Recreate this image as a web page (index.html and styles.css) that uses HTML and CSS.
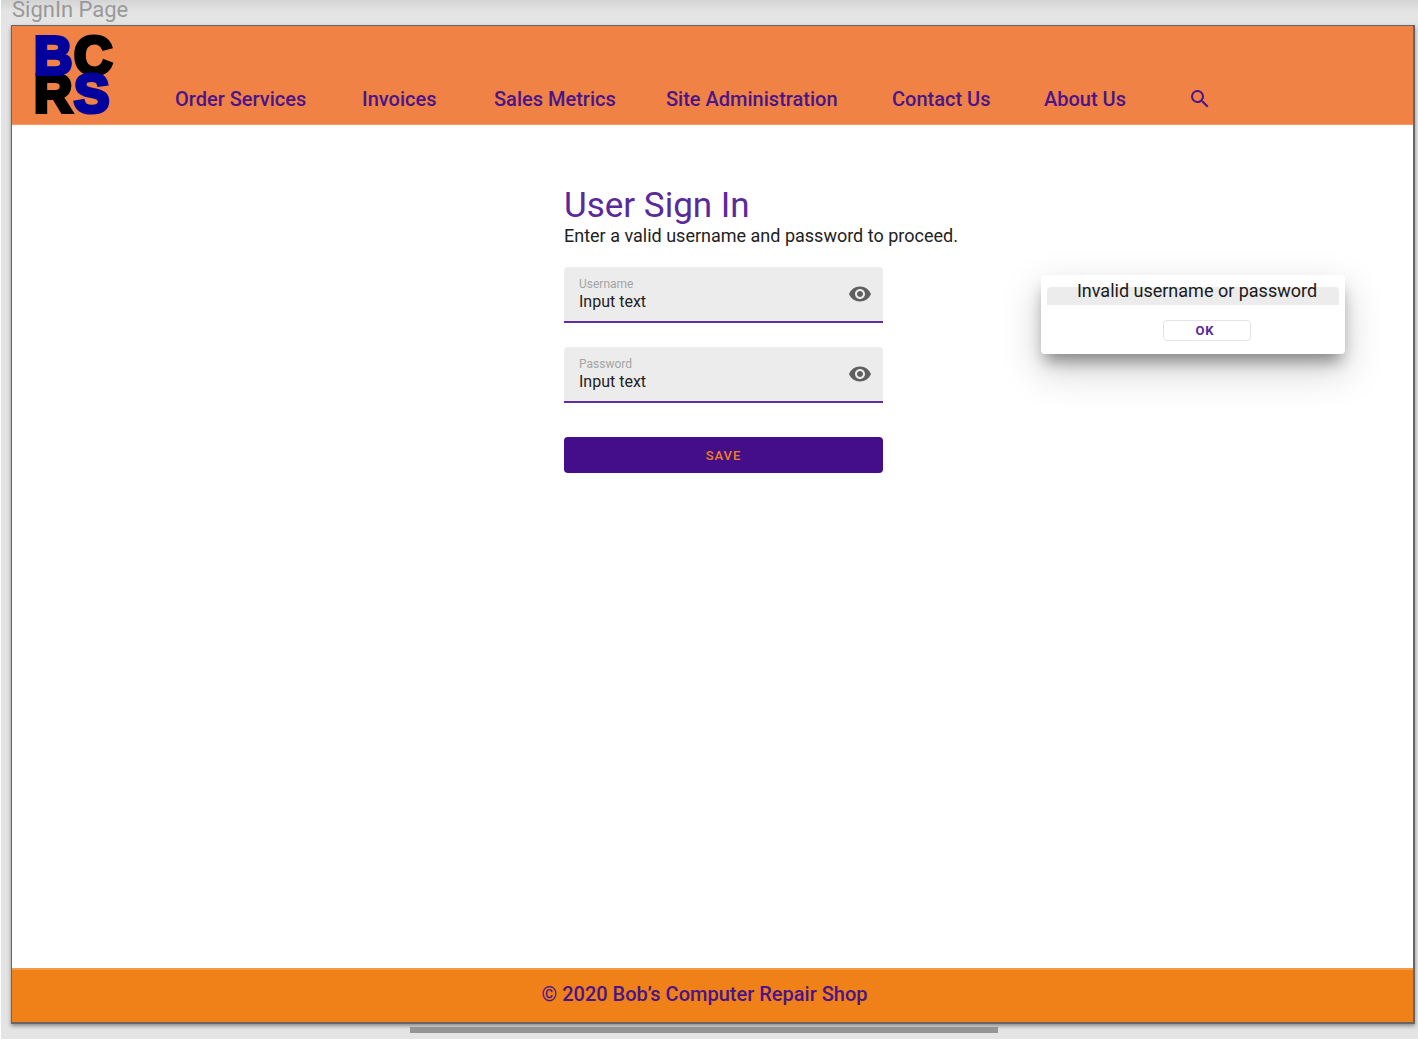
FILE: index.html
```html
<!DOCTYPE html>
<html lang="en">
<head>
<meta charset="utf-8">
<meta name="viewport" content="width=device-width, initial-scale=1">
<title>SignIn Page</title>
<link rel="stylesheet" href="styles.css">
</head>
<body>
<div class="canvas">
  <div class="canvas-label">SignIn Page</div>
  <div class="frame">
    <header class="header">
      <a class="logo" href="#" aria-label="Bob's Computer Repair Shop home">
        <span class="logo-row"><span class="blue">B</span><span>C</span></span>
        <span class="logo-row"><span>R</span><span class="blue">S</span></span>
      </a>
      <nav class="nav">
        <a href="#">Order Services</a>
        <a href="#">Invoices</a>
        <a href="#">Sales Metrics</a>
        <a href="#">Site Administration</a>
        <a href="#">Contact Us</a>
        <a href="#">About Us</a>
        <button class="icon-button" type="button" aria-label="Search">
          <svg width="24" height="24" viewBox="0 0 24 24"><path fill="currentColor" d="M15.5 14h-.79l-.28-.27A6.471 6.471 0 0 0 16 9.500 6.500 6.500 0 1 0 9.500 16c1.610 0 3.090-.59 4.230-1.570l.27.28v.79l5 4.990L20.490 19l-4.990-5zm-6 0C7.010 14 5 11.990 5 9.500S7.010 5 9.500 5 14 7.010 14 9.500 11.990 14 9.500 14z"/></svg>
        </button>
      </nav>
    </header>

    <main class="main">
      <form class="form">
        <h1>User Sign In</h1>
        <p class="intro">Enter a valid username and password to proceed.</p>
        <div class="field">
          <div class="field-text">
            <label for="username">Username</label>
            <input id="username" type="text" value="Input text">
          </div>
          <button class="icon-button eye" type="button" aria-label="Show username">
            <svg width="24" height="24" viewBox="0 0 24 24"><path fill="currentColor" d="M12 4.500C7 4.500 2.730 7.610 1 12c1.730 4.390 6 7.500 11 7.500s9.270-3.110 11-7.500c-1.730-4.390-6-7.500-11-7.500zM12 17c-2.760 0-5-2.240-5-5s2.240-5 5-5 5 2.240 5 5-2.240 5-5 5zm0-8c-1.660 0-3 1.340-3 3s1.340 3 3 3 3-1.340 3-3-1.340-3-3-3z"/></svg>
          </button>
        </div>
        <div class="field">
          <div class="field-text">
            <label for="password">Password</label>
            <input id="password" type="text" value="Input text">
          </div>
          <button class="icon-button eye" type="button" aria-label="Show password">
            <svg width="24" height="24" viewBox="0 0 24 24"><path fill="currentColor" d="M12 4.500C7 4.500 2.730 7.610 1 12c1.730 4.390 6 7.500 11 7.500s9.270-3.110 11-7.500c-1.730-4.390-6-7.500-11-7.500zM12 17c-2.760 0-5-2.240-5-5s2.240-5 5-5 5 2.240 5 5-2.240 5-5 5zm0-8c-1.660 0-3 1.340-3 3s1.340 3 3 3 3-1.340 3-3-1.340-3-3-3z"/></svg>
          </button>
        </div>
        <button class="save" type="submit">SAVE</button>
      </form>

      <div class="dialog" role="alertdialog" aria-labelledby="dialog-text">
        <div class="dialog-bar"><p id="dialog-text">Invalid username or password</p></div>
        <button class="ok" type="button">OK</button>
      </div>
    </main>

    <footer class="footer">© 2020 Bob’s Computer Repair Shop</footer>
  </div>
  <div class="scroll-thumb"></div>
</div>
</body>
</html>
```
FILE: styles.css
```css
* {
  box-sizing: border-box;
}

body {
  margin: 0;
  padding: 0 0 5px 1px;
  background: #fff;
  color: #222;
  font-family: Roboto, "Liberation Sans", sans-serif;
}

h1,
p {
  margin: 0;
  font-weight: 400;
}

button,
input {
  font-family: inherit;
}

.canvas {
  position: relative;
  display: flex;
  flex-direction: column;
  min-height: calc(100vh - 5px);
  padding: 0 3px 15px 10px;
  background: linear-gradient(#d4d4d4, #e4e4e4 12px);
}

.canvas-label {
  height: 25px;
  padding-left: 1px;
  color: #999;
  font-size: 22px;
  line-height: 20px;
}

.frame {
  flex: 1;
  display: flex;
  flex-direction: column;
  border: 1px solid #666;
  border-width: 1px 2px 2px 1px;
  background: #fff;
  box-shadow: 0 2px 4px rgba(0, 0, 0, 0.4);
}

.header {
  display: flex;
  align-items: flex-end;
  height: 99px;
  padding: 0 24px 0 22px;
  border-bottom: 1px solid #f79a68;
  background: #ef8244;
}

.logo {
  width: 141px;
  height: 87px;
  color: #000;
  font: 700 53px/38px "Liberation Sans", Arial, sans-serif;
  text-decoration: none;
  -webkit-text-stroke: 4px currentColor;
}

.logo-row {
  display: grid;
  grid-template-columns: 40px 40px;
}

.logo .blue {
  position: relative;
  color: #00009c;
}

.nav {
  display: grid;
  grid-template-columns: 187px 132px 172px 226px 152px 144px 24px;
  align-items: center;
  height: 50px;
  color: #4b1489;
}

.nav a {
  color: inherit;
  font-size: 20px;
  font-weight: 500;
  line-height: 24px;
  text-decoration: none;
  white-space: nowrap;
}

.icon-button {
  display: flex;
  padding: 0;
  border: 0;
  background: none;
  color: inherit;
}

.main {
  position: relative;
  flex: 1;
  padding: 60px 0 60px 22px;
}

.form {
  width: 319px;
  margin: 0 auto;
}

h1 {
  color: #5a2a9c;
  font-size: 35px;
  line-height: 41px;
}

.intro {
  margin-bottom: 21px;
  font-size: 18px;
  line-height: 20px;
  white-space: nowrap;
}

.field {
  display: flex;
  align-items: center;
  justify-content: space-between;
  height: 56px;
  margin-bottom: 24px;
  padding: 0 11px 0 15px;
  border-bottom: 2px solid #5d2fa0;
  border-radius: 4px 4px 0 0;
  background: #ececec;
}

.field-text {
  display: flex;
  flex-direction: column;
}

.field label {
  color: #a4a4a4;
  font-size: 12px;
  line-height: 14px;
}

.field input {
  width: 200px;
  height: 20px;
  padding: 0;
  border: 0;
  background: none;
  color: #222;
  font-size: 16px;
}

.eye {
  color: #606060;
}

.save {
  display: block;
  width: 100%;
  height: 36px;
  margin-top: 34px;
  padding: 0;
  border: 0;
  border-radius: 4px;
  background: #440e8a;
  color: #ef8020;
  font-size: 13px;
  font-weight: 500;
  letter-spacing: 1px;
}

.dialog {
  position: absolute;
  top: 150px;
  right: 68px;
  width: 304px;
  height: 79px;
  padding: 12px 6px;
  border-radius: 4px;
  background: #fff;
  box-shadow: 0 11px 15px -4px rgba(0, 0, 0, 0.4), 0 16px 38px 3px rgba(0, 0, 0, 0.16);
}

.dialog-bar {
  height: 18px;
  border-radius: 4px 4px 0 0;
  background: #ececec;
}

.dialog-bar p {
  padding-left: 8px;
  color: #1a1a1a;
  font-size: 18px;
  line-height: 8px;
  text-align: center;
}

.ok {
  display: block;
  width: 88px;
  height: 21px;
  margin: 15px 0 0 116px;
  padding: 0 4px 0 0;
  border: 1px solid #e4e4e4;
  border-radius: 4px;
  background: #fff;
  color: #5a2a9c;
  font-size: 13px;
  font-weight: 700;
  letter-spacing: 1px;
}

.footer {
  height: 54px;
  padding-right: 16px;
  border-top: 2px solid #f09a4a;
  background: #ef8118;
  color: #4b1489;
  font-size: 20px;
  font-weight: 500;
  line-height: 48px;
  text-align: center;
}

/* Horizontal scrollbar of the design canvas */
.scroll-thumb {
  position: absolute;
  bottom: 6px;
  left: 409px;
  width: 588px;
  height: 6px;
  background: #949494;
}
```
